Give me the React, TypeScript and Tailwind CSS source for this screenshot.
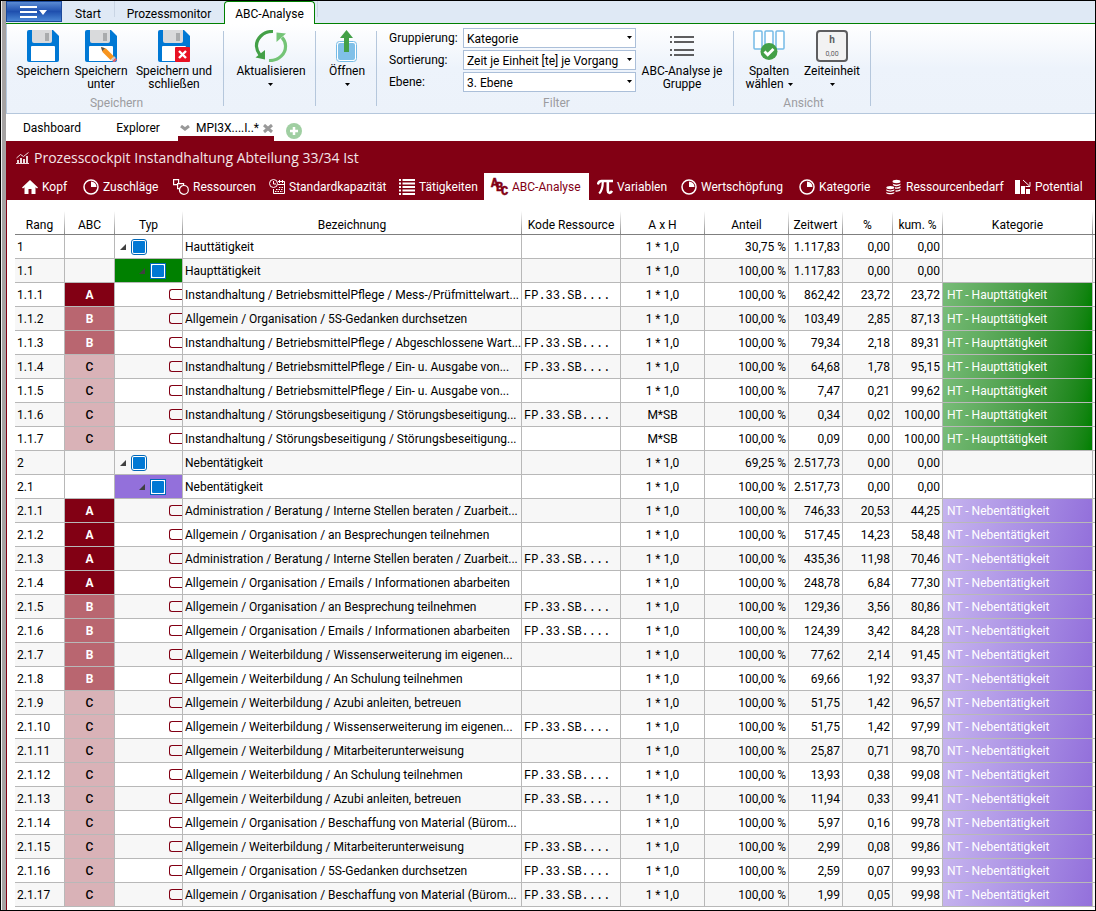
import clsx from 'clsx'
import { ReactNode } from 'react'

type Abc = 'A' | 'B' | 'C' | ''
type Kategorie = 'HT' | 'NT' | ''

interface Row {
    rang: string
    abc: Abc
    text: string
    kode: string
    axh: string
    anteil: string
    zeitwert: string
    prozent: string
    kum: string
    kategorie: Kategorie
}

const FP = 'FP.33.SB....'

function group(rang: string, text: string, anteil: string, zeitwert: string): Row {
    return { rang, abc: '', text, kode: '', axh: '1 * 1,0', anteil, zeitwert, prozent: '0,00', kum: '0,00', kategorie: '' }
}

function leaf(
    rang: string,
    abc: Abc,
    text: string,
    kode: string,
    zeitwert: string,
    prozent: string,
    kum: string,
    axh: string = '1 * 1,0'
): Row {
    const kategorie = rang.startsWith('1') ? 'HT' : 'NT'
    return { rang, abc, text, kode, axh, anteil: '100,00 %', zeitwert, prozent, kum, kategorie }
}

const ROWS: Row[] = [
    group('1', 'Hauttätigkeit', '30,75 %', '1.117,83'),
    group('1.1', 'Haupttätigkeit', '100,00 %', '1.117,83'),
    leaf('1.1.1', 'A', 'Instandhaltung / BetriebsmittelPflege / Mess-/Prüfmittelwart...', FP, '862,42', '23,72', '23,72'),
    leaf('1.1.2', 'B', 'Allgemein / Organisation / 5S-Gedanken durchsetzen', '', '103,49', '2,85', '87,13'),
    leaf('1.1.3', 'B', 'Instandhaltung / BetriebsmittelPflege / Abgeschlossene Wart...', FP, '79,34', '2,18', '89,31'),
    leaf('1.1.4', 'C', 'Instandhaltung / BetriebsmittelPflege / Ein- u. Ausgabe von...', FP, '64,68', '1,78', '95,15'),
    leaf('1.1.5', 'C', 'Instandhaltung / BetriebsmittelPflege / Ein- u. Ausgabe von...', '', '7,47', '0,21', '99,62'),
    leaf('1.1.6', 'C', 'Instandhaltung / Störungsbeseitigung / Störungsbeseitigung...', FP, '0,34', '0,02', '100,00', 'M*SB'),
    leaf('1.1.7', 'C', 'Instandhaltung / Störungsbeseitigung / Störungsbeseitigung...', '', '0,09', '0,00', '100,00', 'M*SB'),
    group('2', 'Nebentätigkeit', '69,25 %', '2.517,73'),
    group('2.1', 'Nebentätigkeit', '100,00 %', '2.517,73'),
    leaf('2.1.1', 'A', 'Administration / Beratung / Interne Stellen beraten / Zuarbeit...', '', '746,33', '20,53', '44,25'),
    leaf('2.1.2', 'A', 'Allgemein / Organisation / an Besprechungen teilnehmen', '', '517,45', '14,23', '58,48'),
    leaf('2.1.3', 'A', 'Administration / Beratung / Interne Stellen beraten / Zuarbeit...', FP, '435,36', '11,98', '70,46'),
    leaf('2.1.4', 'A', 'Allgemein / Organisation / Emails / Informationen abarbeiten', '', '248,78', '6,84', '77,30'),
    leaf('2.1.5', 'B', 'Allgemein / Organisation / an Besprechung teilnehmen', FP, '129,36', '3,56', '80,86'),
    leaf('2.1.6', 'B', 'Allgemein / Organisation / Emails / Informationen abarbeiten', FP, '124,39', '3,42', '84,28'),
    leaf('2.1.7', 'B', 'Allgemein / Weiterbildung / Wissenserweiterung im eigenen...', '', '77,62', '2,14', '91,45'),
    leaf('2.1.8', 'B', 'Allgemein / Weiterbildung / An Schulung teilnehmen', '', '69,66', '1,92', '93,37'),
    leaf('2.1.9', 'C', 'Allgemein / Weiterbildung / Azubi anleiten, betreuen', '', '51,75', '1,42', '96,57'),
    leaf('2.1.10', 'C', 'Allgemein / Weiterbildung / Wissenserweiterung im eigenen...', FP, '51,75', '1,42', '97,99'),
    leaf('2.1.11', 'C', 'Allgemein / Weiterbildung / Mitarbeiterunterweisung', '', '25,87', '0,71', '98,70'),
    leaf('2.1.12', 'C', 'Allgemein / Weiterbildung / An Schulung teilnehmen', FP, '13,93', '0,38', '99,08'),
    leaf('2.1.13', 'C', 'Allgemein / Weiterbildung / Azubi anleiten, betreuen', FP, '11,94', '0,33', '99,41'),
    leaf('2.1.14', 'C', 'Allgemein / Organisation / Beschaffung von Material (Bürom...', '', '5,97', '0,16', '99,78'),
    leaf('2.1.15', 'C', 'Allgemein / Weiterbildung / Mitarbeiterunterweisung', FP, '2,99', '0,08', '99,86'),
    leaf('2.1.16', 'C', 'Allgemein / Organisation / 5S-Gedanken durchsetzen', FP, '2,59', '0,07', '99,93'),
    leaf('2.1.17', 'C', 'Allgemein / Organisation / Beschaffung von Material (Bürom...', FP, '1,99', '0,05', '99,98'),
]

const ABC_CLASSES: Record<Abc, string> = {
    A: 'bg-[#820014] font-bold text-white',
    B: 'bg-[#b96670] font-bold text-white',
    C: 'bg-[#d9b2b7] font-medium text-black',
    '': '',
}

const KATEGORIE_CLASSES: Record<Kategorie, string> = {
    HT: 'bg-linear-105 from-[#78bc78] to-[#008000]',
    NT: 'bg-linear-105 from-[#c6b4ee] to-[#9370db]',
    '': '',
}

const KATEGORIE_LABELS: Record<Kategorie, string> = {
    HT: 'HT - Haupttätigkeit',
    NT: 'NT - Nebentätigkeit',
    '': '',
}

export default function App(): JSX.Element {
    return (
        <div className="flex min-h-screen border border-black bg-white font-['Roboto','Noto_Sans',sans-serif] text-xs text-black">
            <div className="w-[5px] shrink-0 border-l border-[#f0f0f0] bg-[#a5a2a2]" />
            <div className="flex min-w-0 flex-1 flex-col">
                <MenuTabs />
                <Ribbon />
                <DocumentTabs />
                <main className="flex flex-1 flex-col border-l border-[#820014]">
                    <CockpitHeader />
                    <div className="pt-[11px] pl-2">
                        <AbcTable />
                    </div>
                </main>
            </div>
        </div>
    )
}

function MenuTabs(): JSX.Element {
    return (
        <nav className="flex h-[23px] border-b border-[#008000] bg-[#dfe9f5]">
            <button
                type="button"
                aria-label="Menü"
                className="flex h-[21px] w-14 items-center justify-center border border-[#1c4a9c] bg-linear-to-b from-[#5a8ad2] via-[#1f4fae] to-[#4a86d4]"
            >
                <svg width="28" height="14" viewBox="0 0 28 14" fill="#fff">
                    <path d="M0 1h17v2H0zM0 6h17v2H0zM0 11h17v2H0zM19 5h8l-4 5z" />
                </svg>
            </button>
            <button type="button" className="w-[52px] pt-1">
                Start
            </button>
            <div className="h-4 w-px bg-[#c9d5e4]" />
            <button type="button" className="w-[108px] pt-1">
                Prozessmonitor
            </button>
            <button
                type="button"
                className="-mb-px ml-px w-[91px] rounded-t-sm border border-b-0 border-[#008000] bg-white pt-0.5"
            >
                ABC-Analyse
            </button>
            <div className="ml-0.5 h-4 w-px bg-[#c9d5e4]" />
        </nav>
    )
}

function Ribbon(): JSX.Element {
    return (
        <div className="flex h-[90px] border-b border-l border-[#b5c7dc] bg-linear-to-b from-white via-[#edf3fb] to-[#ecf2fa] leading-[13px]">
            <RibbonGroup label="Speichern" className="w-[217px] pl-[5px]">
                <RibbonButton icon={<FloppyIcon />} className="w-[62px]">
                    Speichern
                </RibbonButton>
                <RibbonButton icon={<FloppyIcon badge="pencil" />} className="w-[54px]">
                    Speichern unter
                </RibbonButton>
                <RibbonButton icon={<FloppyIcon badge="close" />} className="w-[92px]">
                    Speichern und schließen
                </RibbonButton>
            </RibbonGroup>
            <RibbonGroup className="w-[92px] pl-0.5">
                <RibbonButton icon={<RefreshIcon />} className="w-[90px]">
                    Aktualisieren
                    <Caret className="mx-auto mt-[5px]" />
                </RibbonButton>
            </RibbonGroup>
            <RibbonGroup className="w-[61px] pl-0.5">
                <RibbonButton icon={<OpenIcon />} className="w-[58px]">
                    Öffnen
                    <Caret className="mx-auto mt-[5px]" />
                </RibbonButton>
            </RibbonGroup>
            <RibbonGroup label="Filter" className="w-[357px] pl-3">
                <div className="grid grid-cols-[74px_173px] content-start gap-y-0.5 pt-1">
                    <FilterSelect id="gruppierung" label="Gruppierung:" value="Kategorie" />
                    <FilterSelect id="sortierung" label="Sortierung:" value="Zeit je Einheit [te] je Vorgang" />
                    <FilterSelect id="ebene" label="Ebene:" value="3. Ebene" />
                </div>
                <RibbonButton icon={<ListIcon />} className="w-[92px]">
                    ABC-Analyse je Gruppe
                </RibbonButton>
            </RibbonGroup>
            <RibbonGroup label="Ansicht" className="w-[137px] pl-1">
                <RibbonButton icon={<ColumnsIcon />} className="w-[62px]">
                    <span className="block">Spalten</span>
                    <span className="flex items-center gap-1">
                        wählen <Caret />
                    </span>
                </RibbonButton>
                <RibbonButton icon={<TimeUnitIcon />} className="w-16">
                    Zeiteinheit
                    <Caret className="mx-auto mt-[5px]" />
                </RibbonButton>
            </RibbonGroup>
        </div>
    )
}

function RibbonGroup({
    label,
    className,
    children,
}: {
    label?: string
    className?: string
    children: ReactNode
}): JSX.Element {
    return (
        <section className="flex shrink-0">
            <div className="flex flex-col">
                <div className={clsx('flex h-[71px]', className)}>{children}</div>
                <div className="pl-0.5 text-center leading-4 text-[#9c9ca0]">{label}</div>
            </div>
            <div className="-ml-px mt-[7px] h-[75px] w-px bg-[#b5c7dc]" />
        </section>
    )
}

function RibbonButton({
    icon,
    className,
    children,
}: {
    icon: ReactNode
    className?: string
    children: ReactNode
}): JSX.Element {
    return (
        <button type="button" className={clsx('flex shrink-0 flex-col items-center pt-1.5', className)}>
            {icon}
            <span className="mt-[3px] block text-center">{children}</span>
        </button>
    )
}

function FilterSelect({ id, label, value }: { id: string; label: string; value: string }): JSX.Element {
    return (
        <>
            <label htmlFor={id} className="leading-5">
                {label}
            </label>
            <div className="relative">
                <select
                    id={id}
                    defaultValue={value}
                    className="h-5 w-full appearance-none border border-[#abbfd9] bg-white pt-px pl-[3px] text-xs"
                >
                    <option>{value}</option>
                </select>
                <Caret className="pointer-events-none absolute top-2 right-1" />
            </div>
        </>
    )
}

function Caret({ className }: { className?: string }): JSX.Element {
    return (
        <svg width="5" height="3" viewBox="0 0 5 3" className={className}>
            <path d="M0 0h5L2.500 3z" fill="#000" />
        </svg>
    )
}

function DocumentTabs(): JSX.Element {
    return (
        <div className="flex h-[27px] pl-1.5">
            <button type="button" className="w-20 pt-px">
                Dashboard
            </button>
            <button type="button" className="w-[92px] pt-px">
                Explorer
            </button>
            <div className="-ml-1.5 flex w-24 items-center gap-1 border-b-[5px] border-[#820014] pt-1.5 pl-0.5">
                <svg width="10" height="6" viewBox="0 0 10 6" fill="none" stroke="#999" strokeWidth="3">
                    <path d="M1 1l4 3 4-3" />
                </svg>
                <span className="ml-0.5">MPI3X....I..*</span>
                <button type="button" aria-label="Schließen">
                    <svg width="10" height="9" viewBox="0 0 10 9" stroke="#999" strokeWidth="3">
                        <path d="M1 1l8 7M9 1L1 8" />
                    </svg>
                </button>
            </div>
            <button type="button" aria-label="Neuer Tab" className="ml-3 pt-1.5">
                <svg width="16" height="16" viewBox="0 0 16 16">
                    <circle cx="8" cy="8" r="8" fill="#a0cfa2" />
                    <path d="M8 4v8M4 8h8" stroke="#fff" strokeWidth="2.500" />
                </svg>
            </button>
        </div>
    )
}

const COCKPIT_TABS: { label: string; icon: ReactNode; className: string }[] = [
    { label: 'Kopf', icon: <HomeIcon />, className: 'w-[61px]' },
    { label: 'Zuschläge', icon: <PieIcon />, className: 'w-[90px]' },
    { label: 'Ressourcen', icon: <ShapesIcon />, className: 'w-24' },
    { label: 'Standardkapazität', icon: <CapacityIcon />, className: 'w-[130px]' },
    { label: 'Tätigkeiten', icon: <LinesIcon />, className: 'w-[93px]' },
    { label: 'ABC-Analyse', icon: <AbcIcon />, className: 'w-[105px] bg-white text-[#820014]' },
    { label: 'Variablen', icon: <PiIcon />, className: 'w-[84px]' },
    { label: 'Wertschöpfung', icon: <PieIcon />, className: 'w-[118px]' },
    { label: 'Kategorie', icon: <PieIcon />, className: 'w-[87px]' },
    { label: 'Ressourcenbedarf', icon: <CoinsIcon />, className: 'w-[129px]' },
    { label: 'Potential', icon: <PotentialIcon />, className: 'w-[83px]' },
]

function CockpitHeader(): JSX.Element {
    return (
        <header className="bg-[#820014] text-white">
            <h1 className="flex h-8 items-center gap-[5px] pt-0.5 pl-[9px] font-['Open_Sans','Noto_Sans',sans-serif] text-sm text-[#f3e6e8]">
                <ChartIcon />
                Prozesscockpit Instandhaltung Abteilung 33/34 Ist
            </h1>
            <div className="flex h-[27px] pl-[7px]">
                {COCKPIT_TABS.map((tab) => (
                    <button
                        key={tab.label}
                        type="button"
                        className={clsx('flex shrink-0 items-center gap-1 pl-2 whitespace-nowrap', tab.className)}
                    >
                        {tab.icon}
                        {tab.label}
                    </button>
                ))}
            </div>
        </header>
    )
}

function AbcTable(): JSX.Element {
    return (
        <table className="w-full table-fixed border-separate border-spacing-0">
            <colgroup>
                <col className="w-[50px]" />
                <col className="w-[50px]" />
                <col className="w-[68px]" />
                <col />
                <col className="w-[99px]" />
                <col className="w-[84px]" />
                <col className="w-[84px]" />
                <col className="w-[54px]" />
                <col className="w-[50px]" />
                <col className="w-[50px]" />
                <col className="w-[150px]" />
                <col className="w-0.5" />
            </colgroup>
            <thead>
                <tr>
                    {['Rang', 'ABC', 'Typ', 'Bezeichnung', 'Kode Ressource', 'A x H', 'Anteil', 'Zeitwert', '%', 'kum. %', 'Kategorie'].map(
                        (title) => (
                            <th key={title} className="h-6 border-b border-[#7f7f7f] p-0 font-normal whitespace-nowrap">
                                <div className="flex h-[23px]">
                                    <span className="flex-1 pt-1.5 leading-4">{title}</span>
                                    <span className="w-px bg-linear-to-b from-white to-[#8f8f8f]" />
                                </div>
                            </th>
                        )
                    )}
                    <th className="border-b border-[#7f7f7f] p-0" />
                </tr>
            </thead>
            <tbody>
                {ROWS.map((row) => (
                    <TableRow key={row.rang} row={row} />
                ))}
            </tbody>
        </table>
    )
}

function TableRow({ row }: { row: Row }): JSX.Element {
    const cell = 'h-6 border-r border-b border-[#b8b8b8] px-0.5 py-0 leading-4 whitespace-nowrap overflow-hidden'
    return (
        <tr className="even:bg-[#f7f7f7]">
            <td className={cell}>{row.rang}</td>
            <td className={clsx(cell, 'text-center', ABC_CLASSES[row.abc])}>{row.abc}</td>
            <td
                className={clsx(
                    'h-6 overflow-hidden border-r border-b border-[#b8b8b8] p-0',
                    row.rang === '1.1' && 'bg-[#008000]',
                    row.rang === '2.1' && 'bg-[#9370db]'
                )}
            >
                <TypeMarker rang={row.rang} />
            </td>
            <td className={cell}>{row.text}</td>
            <td className={clsx(cell, "pt-0.5 font-['Liberation_Mono',monospace]")}>{row.kode}</td>
            <td className={clsx(cell, 'text-center')}>{row.axh}</td>
            <td className={clsx(cell, 'text-right')}>{row.anteil}</td>
            <td className={clsx(cell, 'text-right')}>{row.zeitwert}</td>
            <td className={clsx(cell, 'text-right')}>{row.prozent}</td>
            <td className={clsx(cell, 'text-right')}>{row.kum}</td>
            <td className={clsx(cell, 'pl-1 text-white', KATEGORIE_CLASSES[row.kategorie])}>
                {KATEGORIE_LABELS[row.kategorie]}
            </td>
            <td className="border-b border-[#b8b8b8] p-0" />
        </tr>
    )
}

// Depth of the rank decides the marker: group node, nested group node or leaf
function TypeMarker({ rang }: { rang: string }): JSX.Element {
    const depth = rang.split('.').length
    if (depth === 3) {
        return (
            <div className="flex justify-end">
                <div className="h-[11px] w-[13px] rounded-l-[3px] border border-r-0 border-[#820014]" />
            </div>
        )
    }
    return (
        <div className={clsx('flex items-center gap-[5px]', depth === 1 ? 'pl-[5px]' : 'pl-6')}>
            <svg width="6" height="6" viewBox="0 0 6 6">
                <path d="M6 0v6H0z" fill="#404040" />
            </svg>
            <div className={clsx('size-4 border border-[#0067b8] bg-white p-px', depth === 1 && 'rounded-[3px]')}>
                <div className="size-full rounded-[1px] bg-[#0078d4]" />
            </div>
        </div>
    )
}

function FloppyIcon({ badge }: { badge?: 'pencil' | 'close' }): JSX.Element {
    return (
        <svg width="32" height="32" viewBox="0 0 32 32">
            <path d="M2 0h24l6 6v24a2 2 0 0 1-2 2H2a2 2 0 0 1-2-2V2a2 2 0 0 1 2-2z" fill="#0078d4" />
            <path d="M5 0h20v11a2 2 0 0 1-2 2H7a2 2 0 0 1-2-2z" fill="#d9dadc" />
            <path d="M18 3h4v8h-4z" fill="#a9abad" />
            <path d="M5 16h22a1 1 0 0 1 1 1v14H4V17a1 1 0 0 1 1-1z" fill="#fff" />
            {badge === 'close' && (
                <>
                    <rect x="17" y="17" width="15" height="15" rx="1" fill="#e81123" />
                    <path d="M21 21l7 7M28 21l-7 7" stroke="#fff" strokeWidth="2.400" />
                </>
            )}
            {badge === 'pencil' && (
                <>
                    <path d="M16 17l5 1.500 8 8-3.500 3.500-8-8z" fill="#f7941d" />
                    <path d="M16 17l4 1.200-2.800 2.800z" fill="#555" />
                    <path d="M26 29.500l3.200-3.200 1.600 1.700-3.200 3.200z" fill="#ccc" />
                    <path d="M27.500 31l3-3 1.500 1.500L29.500 32h-1z" fill="#e8616a" />
                </>
            )}
        </svg>
    )
}

function RefreshIcon(): JSX.Element {
    return (
        <svg width="34" height="32" viewBox="0 0 34 32">
            <path d="M19 1.500C9 1 2 9 2.500 16.500c.2 3.500 1.500 6 3.500 8.500" fill="none" stroke="#43a047" strokeWidth="3.200" />
            <path d="M1.500 27.500l9.500 2V20z" fill="#43a047" />
            <path d="M15 30.500c10 .5 17-7 16.500-15-.2-3-1.500-6-3.500-8" fill="none" stroke="#74c476" strokeWidth="3.200" />
            <path d="M32 3.500l-9.500-1V12z" fill="#74c476" />
        </svg>
    )
}

function OpenIcon(): JSX.Element {
    return (
        <svg width="22" height="32" viewBox="0 0 22 32">
            <rect x=".5" y="11.500" width="20" height="20" rx="3" fill="#fff" stroke="#75bbe6" />
            <rect x="2" y="13" width="17" height="17" rx="2" fill="#80c0e8" />
            <path d="M10.500 0L17 8h-4v14H8V8H4z" fill="#43a047" />
        </svg>
    )
}

function ListIcon(): JSX.Element {
    return (
        <svg width="32" height="32" viewBox="0 0 32 32" fill="#5d5d5f">
            <path d="M4 6h2v2H4zM4 11h2v2H4zM4 19h2v2H4zM4 24h2v2H4z" />
            <path d="M8 6h20v2H8zM8 11h20v2H8zM8 19h20v2H8zM8 24h20v2H8z" />
        </svg>
    )
}

function ColumnsIcon(): JSX.Element {
    return (
        <svg width="32" height="32" viewBox="0 0 32 32">
            <g fill="#fff" stroke="#75bbe6" strokeWidth="1.500">
                <rect x="1" y="1" width="8" height="18" rx="1" />
                <rect x="12" y="1" width="8" height="18" rx="1" />
                <rect x="23" y="1" width="8" height="18" rx="1" />
            </g>
            <circle cx="16" cy="21.500" r="8.500" fill="#43a047" />
            <path d="M11.500 21.500l3.200 3.200 5.800-5.800" fill="none" stroke="#fff" strokeWidth="2.800" />
        </svg>
    )
}

function TimeUnitIcon(): JSX.Element {
    return (
        <svg width="32" height="32" viewBox="0 0 32 32" textAnchor="middle">
            <rect x="1" y="1" width="30" height="30" rx="3" fill="#f2f2f2" stroke="#5d5d5f" strokeWidth="2" />
            <text x="16" y="13" fontSize="10" fontWeight="700" fill="#5d5d5f">
                h
            </text>
            <text x="16" y="26" fontSize="7" fill="#5d5d5f">
                0,00
            </text>
        </svg>
    )
}

function ChartIcon(): JSX.Element {
    return (
        <svg width="13" height="12" viewBox="0 0 13 12" fill="#fff" fillOpacity=".85">
            <path d="M1 8h2v3H1zM4 6h2v5H4zM7 7h2v4H7zM10 4h2v7h-2zM0 11h13v1H0z" />
            <path d="M.5 6l4-3.500 3 2L12.500.5" fill="none" stroke="#fff" strokeOpacity=".85" />
        </svg>
    )
}

function HomeIcon(): JSX.Element {
    return (
        <svg width="16" height="16" viewBox="0 0 16 16" fill="currentColor">
            <path d="M8 1L0 8.500l1 1L2.500 8.200V15H6.500v-5h3v5h4V8.200L15 9.500l1-1z" />
        </svg>
    )
}

function PieIcon(): JSX.Element {
    return (
        <svg width="16" height="16" viewBox="0 0 16 16">
            <circle cx="8" cy="8" r="7" fill="none" stroke="currentColor" strokeWidth="1.500" />
            <path d="M8 8V2.500A5.500 5.500 0 0 1 13.500 8z" fill="currentColor" />
        </svg>
    )
}

function ShapesIcon(): JSX.Element {
    return (
        <svg width="16" height="16" viewBox="0 0 16 16" fill="#820014" stroke="currentColor" strokeWidth="1.200">
            <path d="M.6.600h5v5h-5z" />
            <path d="M4.600 4.600h6v5h-6z" />
            <circle cx="10.900" cy="10.900" r="4.400" />
        </svg>
    )
}

function CapacityIcon(): JSX.Element {
    return (
        <svg width="16" height="16" viewBox="0 0 16 16" fill="none" stroke="currentColor">
            <path d="M9 2.500h6.500v12h-11V10M9 5.500h6" />
            <circle cx="4.500" cy="4.500" r="4" fill="#820014" />
            <path d="M4.500 2v3H7" />
            <path d="M6 12.500h8M7 10.500h7M10 8.500h4" strokeDasharray="1.500 1" />
            <path d="M10.500 1v3M13.500 1v3" />
        </svg>
    )
}

function LinesIcon(): JSX.Element {
    return (
        <svg width="16" height="16" viewBox="0 0 16 16" fill="currentColor">
            <path d="M0 0h2v2H0zM0 3.500h2v2H0zM0 7h2v2H0zM0 10.500h2v2H0zM0 14h2v2H0z" />
            <path d="M3.500 0H16v2H3.500zM3.500 3.500H16v2H3.500zM3.500 7H16v2H3.500zM3.500 10.500H16v2H3.500zM3.500 14H16v2H3.500z" />
        </svg>
    )
}

function AbcIcon(): JSX.Element {
    return (
        <svg
            width="16"
            height="16"
            viewBox="0 0 16 16"
            fill="currentColor"
            stroke="currentColor"
            strokeWidth=".5"
            className="overflow-visible font-['Liberation_Mono',monospace] font-bold"
        >
            <text x="-1" y="8" fontSize="12">
                A
            </text>
            <text x="4" y="12" fontSize="12">
                B
            </text>
            <text x="9" y="16" fontSize="12">
                C
            </text>
        </svg>
    )
}

function PiIcon(): JSX.Element {
    return (
        <svg width="16" height="16" viewBox="0 0 16 16" fill="none" stroke="currentColor">
            <path d="M.8 5.500C1.500 2.800 2.500 2 4.500 2H16" strokeWidth="2.400" />
            <path d="M5.800 2.500c0 5-.6 9-3.600 12" strokeWidth="2.200" />
            <path d="M10.800 2.500v9c0 2.500 2.500 3.500 4.200.5" strokeWidth="2.600" />
        </svg>
    )
}

function CoinsIcon(): JSX.Element {
    return (
        <svg width="16" height="16" viewBox="0 0 16 16" fill="currentColor">
            <ellipse cx="10.500" cy="2.500" rx="4" ry="1.700" />
            <path d="M6.500 4.500c1.500 1.500 6.500 1.500 8 0v1.300c-1 1.500-5 1.700-7 .8zM9 8.300c2 .3 4.500 0 5.500-1.200v1.300c-.8 1.200-3 1.600-5.500 1.400zM9.500 11.200c2 .2 4-.1 5-1.200v1.300c-.8 1.200-2.500 1.500-5 1.400z" />
            <ellipse cx="4.300" cy="8.600" rx="4" ry="1.700" />
            <path d="M.3 10.300c1.500 1.500 6.500 1.500 8 0v1.300c-1.500 1.500-6.500 1.500-8 0zM.3 12.900c1.500 1.500 6.500 1.500 8 0v1.300c-1.500 1.500-6.500 1.500-8 0z" />
        </svg>
    )
}

function PotentialIcon(): JSX.Element {
    return (
        <svg width="16" height="16" viewBox="0 0 16 16" fill="currentColor">
            <path d="M0 1h5v14H0zM6 7h4v8H6zM11 10h4v5h-4z" />
            <path d="M8 1l6.500 6M15 3v4.500h-4.500" fill="none" stroke="currentColor" strokeWidth="1" />
        </svg>
    )
}
